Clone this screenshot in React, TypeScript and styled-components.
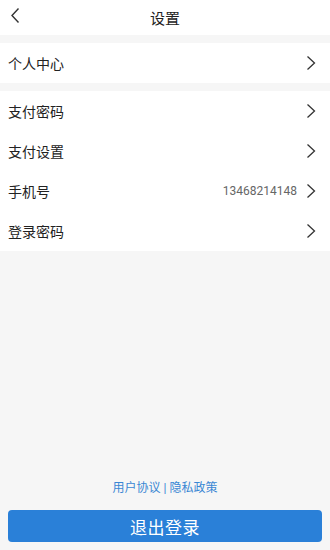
import React from 'react';
import styled, { createGlobalStyle } from 'styled-components';

const GlobalStyle = createGlobalStyle`
  html, body {
    margin: 0;
    padding: 0;
    background: #f6f6f6;
    font-family: Roboto, "Noto Sans CJK SC", sans-serif;
  }
`;

const Page = styled.div`
  width: 330px;
  height: 550px;
  display: flex;
  flex-direction: column;
  background: #f6f6f6;
`;

const Header = styled.div`
  height: 35px;
  background: #ffffff;
  display: flex;
  align-items: center;
  justify-content: center;
  position: relative;
`;

const BackButton = styled.div`
  position: absolute;
  left: 9px;
  top: 7px;
  width: 14px;
  height: 18px;
  display: flex;
`;

const Title = styled.div`
  font-size: 15px;
  color: #222;
`;

const Group = styled.div`
  margin-top: 8px;
  background: #ffffff;
`;

const Row = styled.div`
  height: 40px;
  display: flex;
  align-items: center;
  padding: 0 14px 0 8px;
`;

const Label = styled.div`
  flex: 1;
  font-size: 14px;
  color: #222;
`;

const Value = styled.div`
  font-size: 12px;
  color: #666;
  margin-right: 9px;
`;

const Spacer = styled.div`
  flex: 1;
`;

const Links = styled.div`
  text-align: center;
  font-size: 12px;
  color: #3a87d4;
  margin-bottom: 15px;
`;

const LogoutButton = styled.button`
  margin: 0 8px 8px;
  height: 32px;
  border: none;
  border-radius: 4px;
  background: #2a80d8;
  color: #ffffff;
  font-size: 17px;
  font-family: inherit;
  letter-spacing: 0.5px;
`;

const Chevron = () => (
  <svg width="10" height="16" viewBox="0 0 10 16">
    <path d="M1.5 1.5 L8.5 8 L1.5 14.5" fill="none" stroke="#333" strokeWidth="1.3" />
  </svg>
);

const BackIcon = () => (
  <svg width="14" height="18" viewBox="0 0 14 18">
    <path d="M9.5 1.5 L3 8.5 L9.5 15.5" fill="none" stroke="#333" strokeWidth="1.4" />
  </svg>
);

type Item = { label: string; value?: string };

const items: Item[] = [
  { label: '支付密码' },
  { label: '支付设置' },
  { label: '手机号', value: '13468214148' },
  { label: '登录密码' },
];

const App: React.FC = () => (
  <>
    <GlobalStyle />
    <Page>
      <Header>
        <BackButton>
          <BackIcon />
        </BackButton>
        <Title>设置</Title>
      </Header>
      <Group>
        <Row>
          <Label>个人中心</Label>
          <Chevron />
        </Row>
      </Group>
      <Group>
        {items.map((item) => (
          <Row key={item.label}>
            <Label>{item.label}</Label>
            {item.value && <Value>{item.value}</Value>}
            <Chevron />
          </Row>
        ))}
      </Group>
      <Spacer />
      <Links>用户协议 | 隐私政策</Links>
      <LogoutButton>退出登录</LogoutButton>
    </Page>
  </>
);

export default App;
